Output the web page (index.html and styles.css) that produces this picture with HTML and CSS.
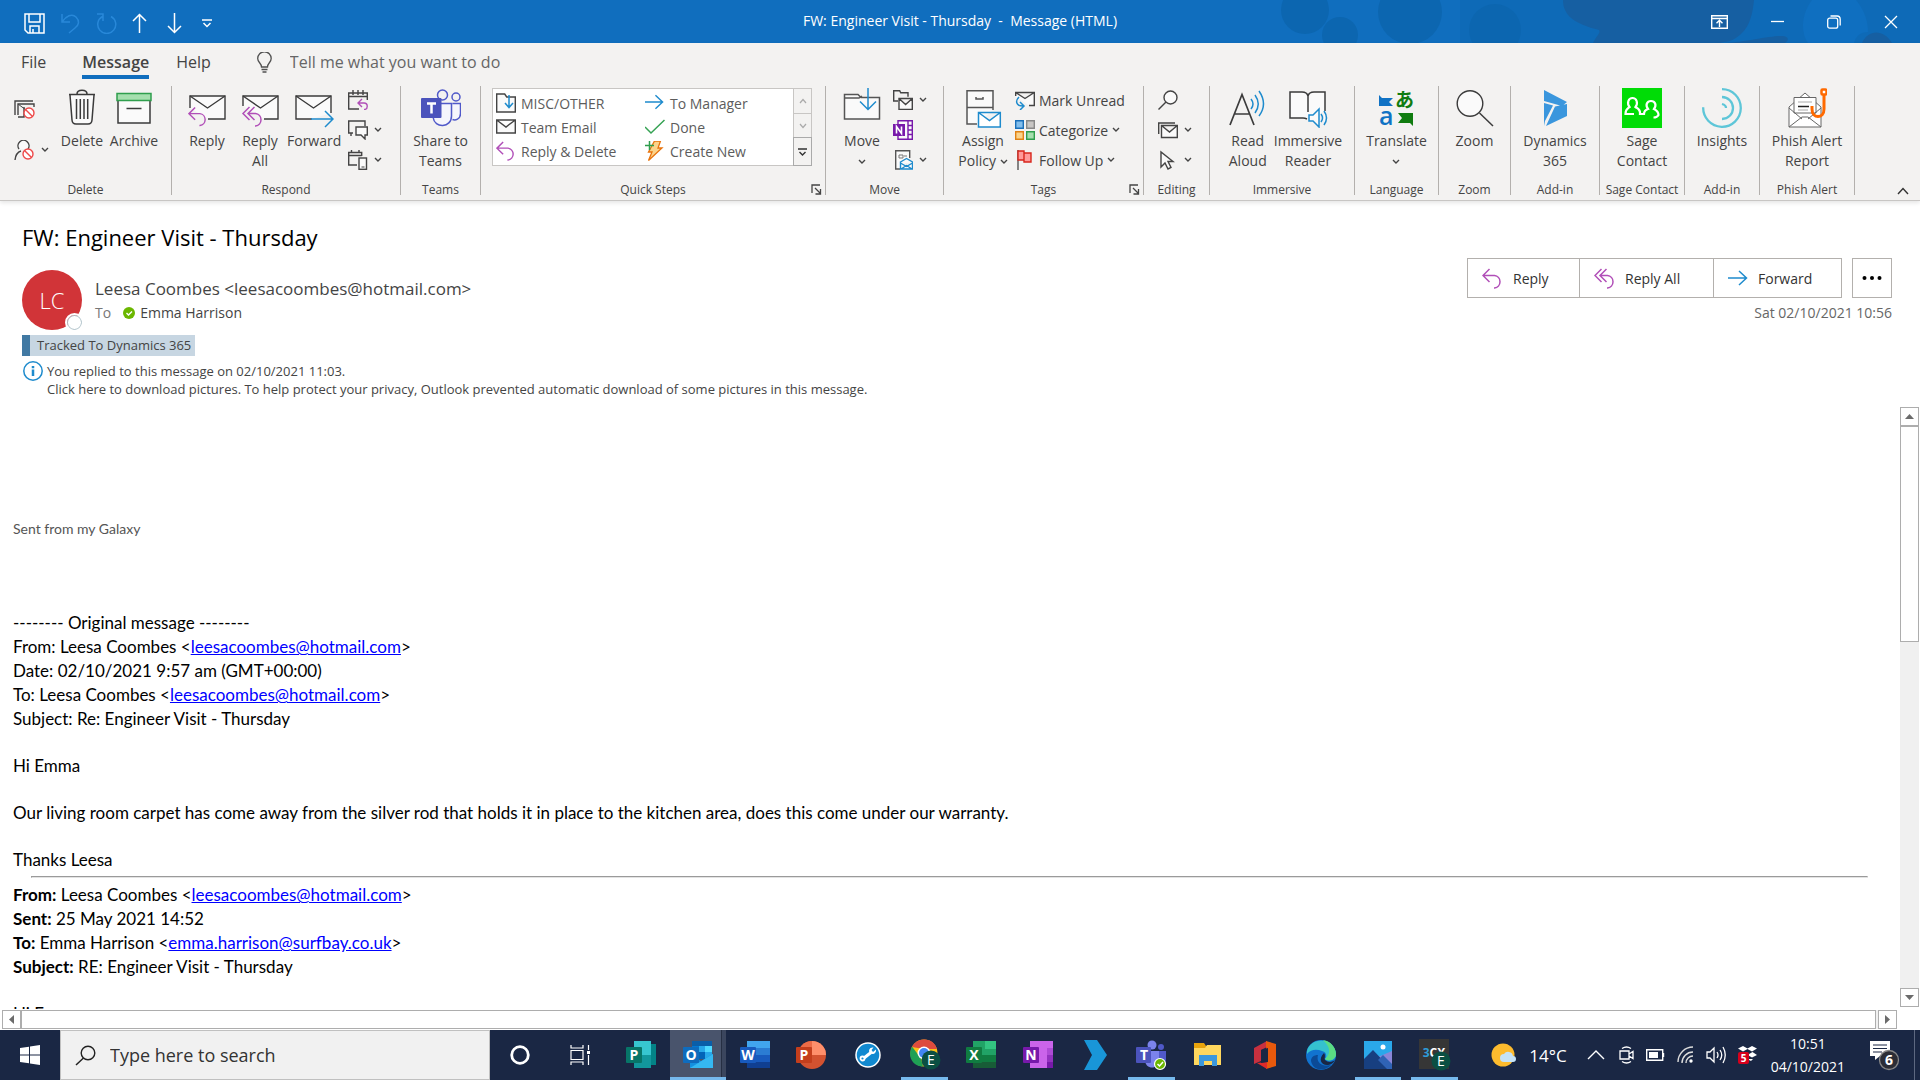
FILE: index.html
```html
<!DOCTYPE html>
<html lang="en">
<head>
    <meta charset="UTF-8">
    <meta name="viewport" content="width=device-width, initial-scale=1.0">
    <title>FW: Engineer Visit - Thursday - Message (HTML)</title>
    <link rel="stylesheet" href="styles.css">
</head>
<body>
    <!-- shared icons -->
    <svg class="sprite" aria-hidden="true">
        <symbol id="chev" viewBox="0 0 8 6"><path d="M1 1l3 3 3-3" fill="none" stroke="currentColor" stroke-width="1.4"/></symbol>
        <symbol id="launch" viewBox="0 0 11 11"><path d="M1 9V1h8M4 4l5 5M9.500 5v5H4.500" fill="none" stroke="#444" stroke-width="1.3"/></symbol>
        <symbol id="reply" viewBox="0 0 21 21"><path d="M7.500 1L1 7.500 7.500 14M1 7.500h11.500a6.300 6.300 0 0 1 0 12.500H12" fill="none" stroke="#b14fb8" stroke-width="1.500"/></symbol>
        <symbol id="replyall" viewBox="0 0 21 21"><path d="M7.500 1L1 7.500 7.500 14M12.500 1L6 7.500l6.500 6.500M6 7.500h7.500a6.300 6.300 0 0 1 0 12.500H13" fill="none" stroke="#b14fb8" stroke-width="1.500"/></symbol>
        <symbol id="forward" viewBox="0 0 20 16"><path d="M0 8h18M11 1l7.500 7L11 15" fill="none" stroke="#1e8bcd" stroke-width="1.500"/></symbol>
        <symbol id="block" viewBox="0 0 12 12"><circle cx="6" cy="6" r="5" fill="#fff" stroke="#ee4a4a" stroke-width="1.400"/><path d="M2.500 2.500l7 7" stroke="#ee4a4a" stroke-width="1.400"/></symbol>
    </svg>

    <header class="titlebar">
        <svg class="titleart" viewBox="0 0 660 43" preserveAspectRatio="xMaxYMin slice" aria-hidden="true">
            <g fill="#0c66b0">
                <circle cx="45" cy="10" r="24"/><circle cx="80" cy="35" r="18"/><circle cx="150" cy="12" r="32"/><circle cx="235" cy="30" r="26"/>
                <path d="M200 0h460v43H200z" opacity=".5"/>
            </g>
            <path fill="#165fa2" d="M303 0h191c-2 22-8 34-24 41l-10 2H333c4-8 8-10 6-13-24-6-36-14-36-30zM465 43c20-1 48-8 58-7 6 1 6 4 2 7zM602 43c6-14 22-14 30 0z"/>
            <path fill="#0f6fc0" d="M552 0h44c10 12 12 24 12 32-8 0-12 4-14 11h-46c-8-12-6-30 4-43z"/>
        </svg>
        <div class="quick">
            <button aria-label="Save"><svg width="21" height="21"><path d="M1 1h19v19H4l-3-3zM5 1v8h11V1M6 20v-7h9v7M9 20v-4" fill="none" stroke="#fff" stroke-width="1.500"/></svg></button>
            <button class="off" aria-label="Undo"><svg width="21" height="21"><path d="M2 1v8h8M2 9C6 3 12 0 16 4s3 8-1 11l-6 5" fill="none" stroke="#2f8fe0" stroke-width="1.500"/></svg></button>
            <button class="off" aria-label="Redo"><svg width="21" height="21"><path d="M1 1h6v7M6.500 3.500A9 9 0 1 0 15 3.500" fill="none" stroke="#2f8fe0" stroke-width="1.500"/></svg></button>
            <button aria-label="Previous item"><svg width="15" height="21"><path d="M7.500 20V1M1 8l6.500-6.500L14 8" fill="none" stroke="#fff" stroke-width="1.500"/></svg></button>
            <button aria-label="Next item"><svg width="15" height="21"><path d="M7.500 0v19M1 13l6.500 6.500L14 13" fill="none" stroke="#fff" stroke-width="1.500"/></svg></button>
            <button aria-label="Customise toolbar"><svg width="10" height="9"><path d="M0 1h10M1.500 4L5 7.500 8.500 4" fill="none" stroke="#fff" stroke-width="1.500"/></svg></button>
        </div>
        <div class="wintitle">FW: Engineer Visit - Thursday &nbsp;-&nbsp; Message (HTML)</div>
        <div class="winbuttons">
            <button aria-label="Ribbon display options"><svg width="17" height="14"><path d="M.7.7h15.600v12.600H.7zM.7 3.500h15.600M8.500 12V5.500M5.500 8.300l3-3 3 3" fill="none" stroke="#fff" stroke-width="1.400"/></svg></button>
            <button aria-label="Minimise"><svg width="13" height="14"><path d="M0 6.500h13" stroke="#fff" stroke-width="1.300"/></svg></button>
            <button aria-label="Restore"><svg width="14" height="14"><rect x=".7" y="3.200" width="10" height="10" rx="2" fill="none" stroke="#fff" stroke-width="1.300"/><path d="M3.500 1h6.500a3.200 3.200 0 0 1 3.200 3.200v6.300" fill="none" stroke="#fff" stroke-width="1.300"/></svg></button>
            <button aria-label="Close"><svg width="14" height="14"><path d="M1 1l12 12M13 1L1 13" stroke="#fff" stroke-width="1.300"/></svg></button>
        </div>
    </header>

    <section class="ribbon">
        <nav class="tabs">
            <a href="#">File</a>
            <a href="#" class="active">Message</a>
            <a href="#">Help</a>
            <label class="tellme">
                <svg width="15" height="21"><path d="M4.500 15c0-4-3.800-4.500-3.800-8.500a6.700 6.700 0 0 1 13.500 0C14.200 10.500 10.500 11 10.500 15zM4.500 17.500h6M5.500 20h4" fill="none" stroke="#505050" stroke-width="1.300"/></svg>
                <input type="text" placeholder="Tell me what you want to do" aria-label="Tell me what you want to do">
            </label>
        </nav>

        <div class="groups">
            <div class="group g-delete">
                <div class="tools">
                    <div class="stack two">
                        <button aria-label="Ignore"><svg width="21" height="20"><path d="M1 15V1h18M4 15V4h16v3M4 17h6V7" fill="none" stroke="#444" stroke-width="1.400"/><path d="M4 4l8 6" stroke="#444"/><use href="#block" x="9" y="7" width="12" height="12"/></svg></button>
                        <button aria-label="Junk"><svg width="21" height="20"><path d="M5 9a5.500 5.500 0 1 1 9 0M1 20c.5-5 3-8 6-9" fill="#fafafa" stroke="#444" stroke-width="1.400"/><use href="#block" x="8" y="8" width="12" height="12"/></svg><svg class="chev"><use href="#chev"/></svg></button>
                    </div>
                    <button class="big"><svg width="40" height="40"><path d="M8 7l2 25q.3 4 4 4h12q3.700 0 4-4l2-25" fill="#fafafa" stroke="#3b3b3b" stroke-width="1.500"/><path d="M7 6.500h26M15 6c0-5 10-5 10 0M14.500 11v20M18.300 11v20M22 11v20M25.700 11v20" fill="none" stroke="#3b3b3b" stroke-width="1.500"/></svg>Delete</button>
                    <button class="big"><svg width="40" height="40"><path d="M4 12h32v23H4z" fill="#fafafa" stroke="#3b3b3b" stroke-width="1.500"/><path d="M3 5.500h34v7H3z" fill="#a5dfae" stroke="#2f9e4d" stroke-width="1.500"/><path d="M12.500 20.500h15" stroke="#3b3b3b" stroke-width="1.500"/></svg>Archive</button>
                </div>
                <h2>Delete</h2>
            </div>

            <div class="group g-respond">
                <div class="tools">
                    <button class="big"><svg width="40" height="40"><path d="M3 20V8h35v23H21" fill="#fafafa" stroke="#3b3b3b" stroke-width="1.400"/><path d="M3 8l17.500 12L38 8" fill="none" stroke="#3b3b3b" stroke-width="1.400"/><use href="#reply" x="1" y="18" width="20" height="21"/></svg>Reply</button>
                    <button class="big"><svg width="40" height="40"><path d="M3 18V8h35v23H24" fill="#fafafa" stroke="#3b3b3b" stroke-width="1.400"/><path d="M3 8l17.500 12L38 8" fill="none" stroke="#3b3b3b" stroke-width="1.400"/><use href="#replyall" x="1" y="18" width="23" height="21"/></svg>Reply<br>All</button>
                    <button class="big"><svg width="40" height="40"><path d="M18 31H2V8h35v17" fill="#fafafa" stroke="#3b3b3b" stroke-width="1.400"/><path d="M2 8l17.500 12L37 8" fill="none" stroke="#3b3b3b" stroke-width="1.400"/><path d="M17 31h21M31 23l8 8-8 8" fill="none" stroke="#1e8bcd" stroke-width="1.500"/></svg>Forward</button>
                    <div class="stack">
                        <button aria-label="Meeting"><svg width="20" height="20"><path d="M11 19H.7V3h18.600v7M.7 6.500h18.600M5 0v5M10 0v5M15 0v5" fill="none" stroke="#444" stroke-width="1.400"/><path d="M14 9l-4 4 4 4M10 13h6a3.200 3.200 0 0 1 0 6.500" fill="none" stroke="#b14fb8" stroke-width="1.400"/></svg></button>
                        <button aria-label="IM"><svg width="20" height="20"><path d="M5 13H3v3M5 13H.7V1H17v5" fill="none" stroke="#444" stroke-width="1.400"/><path d="M8 7h11.300v8H17v4l-4-4H8z" fill="#fafafa" stroke="#444" stroke-width="1.400"/></svg><svg class="chev"><use href="#chev"/></svg></button>
                        <button aria-label="More respond actions"><svg width="20" height="20"><path d="M9 15H.7V2.500h13V6M.7 5.500h13M3.500 0v3M11 0v3" fill="none" stroke="#444" stroke-width="1.400"/><rect x="11" y="8" width="7.500" height="11.300" fill="#fafafa" stroke="#444" stroke-width="1.400"/><path d="M13.500 17h3" stroke="#444"/></svg><svg class="chev"><use href="#chev"/></svg></button>
                    </div>
                </div>
                <h2>Respond</h2>
            </div>

            <div class="group">
                <div class="tools">
                    <button class="big"><svg width="40" height="40"><circle cx="21.500" cy="7" r="5" fill="none" stroke="#5059c9" stroke-width="1.500"/><circle cx="35" cy="9" r="4" fill="none" stroke="#5059c9" stroke-width="1.500"/><path d="M31.500 15.500h8v10c0 6-5.300 7-8 6M12 15.500h18.500V28c0 12-17 13-18.500 1" fill="#f5f5fc" stroke="#5059c9" stroke-width="1.500"/><rect y="10" width="20.500" height="20" rx="1" fill="#4b53bc"/><path d="M6 15.500h9M10.500 15v10.500" stroke="#fff" stroke-width="2.500"/></svg>Share to<br>Teams</button>
                </div>
                <h2>Teams</h2>
            </div>

            <div class="group">
                <div class="tools">
                    <div class="gallery">
                        <div class="steps">
                            <button><svg width="20" height="20"><path d="M.7 1h8l2 3h8.600v15H.7z" fill="#fafafa" stroke="#444" stroke-width="1.400"/><path d="M13 2v12M9 10l4 4.500 4-4.500" fill="none" stroke="#1e8bcd" stroke-width="1.500"/></svg>MISC/OTHER</button>
                            <button><svg width="20" height="20"><use href="#forward" y="1" width="19" height="16"/></svg>To Manager</button>
                            <button><svg width="20" height="20"><path d="M.7 3h18.600v13H.7zM.7 3l9.300 7 9.300-7" fill="#fafafa" stroke="#444" stroke-width="1.400"/></svg>Team Email</button>
                            <button><svg width="20" height="20"><path d="M0 10l6 6L19.500 3" fill="none" stroke="#35a253" stroke-width="1.500"/></svg>Done</button>
                            <button><svg width="20" height="20"><use href="#reply" width="20" height="20"/></svg>Reply &amp; Delete</button>
                            <button><svg width="20" height="20"><path d="M9.500 0h6l-2.500 7h4L3.500 19.500 7 11H3.500z" fill="#fbd38a" stroke="#e8730c" stroke-width="1.300"/><path d="M0 4.500h9M4.500 0v9" stroke="#2f9e4d" stroke-width="1.500"/></svg>Create New</button>
                        </div>
                        <div class="scroller">
                            <button disabled aria-label="Row up"><svg width="8" height="6"><path d="M1 5l3-3.500L7 5" fill="none" stroke="#aaa" stroke-width="1.200"/></svg></button>
                            <button disabled aria-label="Row down"><svg width="8" height="6"><path d="M1 1l3 3.500L7 1" fill="none" stroke="#aaa" stroke-width="1.200"/></svg></button>
                            <button class="more" aria-label="More quick steps"><svg width="9" height="8"><path d="M0 1h9M1.500 4l3 3 3-3" fill="none" stroke="#333" stroke-width="1.400"/></svg></button>
                        </div>
                    </div>
                </div>
                <h2>Quick Steps</h2>
                <button class="launch" aria-label="Quick Steps settings"><svg width="11" height="11"><use href="#launch"/></svg></button>
            </div>

            <div class="group g-move">
                <div class="tools">
                    <button class="big"><svg width="40" height="40"><path d="M2.500 31V6.500H16l3 3h18.500V31z" fill="#fafafa" stroke="#555" stroke-width="1.500"/><path d="M3 10h14l3-2" fill="none" stroke="#555" stroke-width="1.400"/><path d="M26 0v21M18 13.500l8 8 8-8" fill="none" stroke="#1e8bcd" stroke-width="1.500"/></svg>Move<br><svg class="chev"><use href="#chev"/></svg></button>
                    <div class="stack">
                        <button aria-label="Rules"><svg width="20" height="20"><path d="M5 11H.7V.7h6l1 2H15v4" fill="none" stroke="#444" stroke-width="1.400"/><path d="M6 8.500h13.300v11H6zM6 8.500l6.600 6 6.700-6" fill="#fafafa" stroke="#444" stroke-width="1.400"/></svg><svg class="chev"><use href="#chev"/></svg></button>
                        <button aria-label="OneNote"><svg width="20" height="20"><path d="M5 .7h14.300v18.600H5zM15 1v18M15 5.500h4M15 10h4M15 14.500h4" fill="#fafafa" stroke="#7719aa" stroke-width="1.400"/><rect y="4" width="12" height="12" fill="#7719aa"/><path d="M3.500 13.500v-7l5 7v-7" fill="none" stroke="#fff" stroke-width="1.600"/></svg></button>
                        <button aria-label="Actions"><svg width="20" height="20"><path d="M7 19H2.700V.7h14V8" fill="#fafafa" stroke="#555" stroke-width="1.400"/><path d="M6 5h4v3H6zM11 6h3" fill="none" stroke="#777"/><path d="M7.500 12l6-3.500 6 3.500v7h-12zM7.500 13l6 3.500 6-3.500M8 19l5.500-3.500L19 19" fill="#fafafa" stroke="#1e8bcd" stroke-width="1.400"/></svg><svg class="chev"><use href="#chev"/></svg></button>
                    </div>
                </div>
                <h2>Move</h2>
            </div>

            <div class="group g-tags">
                <div class="tools">
                    <button class="big"><svg width="40" height="40"><path d="M14 36H4V2.700h26V22M4 19.500h26M13 9v2h7V9" fill="#fafafa" stroke="#555" stroke-width="1.500"/><path d="M15.500 24.500h21.800V39H15.500zM15.500 24.500l11 8 10.800-8" fill="#fff" stroke="#1e8bcd" stroke-width="1.500"/></svg>Assign<br>Policy <svg class="chev"><use href="#chev"/></svg></button>
                    <div class="stack labelled">
                        <button><svg width="20" height="20"><path d="M.7 6V2.500h18.600v13H14M.7 2.500l9.300 6 9.300-6" fill="#fafafa" stroke="#444" stroke-width="1.400"/><path d="M4 7c-4 4-3 9 4 9M5 12l4 4-4 4" fill="none" stroke="#1e8bcd" stroke-width="1.500"/></svg>Mark Unread</button>
                        <button><svg width="20" height="20"><path d="M.7.7h7.600v7.600H.7z" fill="#83beec" stroke="#1a6fb9" stroke-width="1.400"/><path d="M11.700.7h7.600v7.600h-7.600z" fill="#c8c6c4" stroke="#888" stroke-width="1.400"/><path d="M.7 11.700h7.600v7.600H.7z" fill="#fbd38a" stroke="#e08214" stroke-width="1.400"/><path d="M11.700 11.700h7.600v7.600h-7.600z" fill="#a5dfae" stroke="#2f9e4d" stroke-width="1.400"/></svg>Categorize <svg class="chev"><use href="#chev"/></svg></button>
                        <button><svg width="20" height="20"><path d="M3 0v20" stroke="#555" stroke-width="1.400"/><path d="M3 1h6v2h7v9H9v-2H3zM9 3v7" fill="#ff9a9a" stroke="#d8261c" stroke-width="1.400"/></svg>Follow Up <svg class="chev"><use href="#chev"/></svg></button>
                    </div>
                </div>
                <h2>Tags</h2>
                <button class="launch" aria-label="Tags settings"><svg width="11" height="11"><use href="#launch"/></svg></button>
            </div>

            <div class="group g-edit">
                <div class="tools">
                    <div class="stack">
                        <button aria-label="Find"><svg width="20" height="20"><circle cx="12.500" cy="7.500" r="6.500" fill="#fafafa" stroke="#444" stroke-width="1.400"/><path d="M8 12l-7.500 7.500" stroke="#444" stroke-width="1.400"/></svg></button>
                        <button aria-label="Related"><svg width="20" height="20"><path d="M.7 14V3H17" fill="none" stroke="#444" stroke-width="1.400"/><path d="M3.500 5.500h15.800v12H3.500zM3.500 5.500l8 6.500 7.800-6.500" fill="#fafafa" stroke="#444" stroke-width="1.400"/></svg><svg class="chev"><use href="#chev"/></svg></button>
                        <button aria-label="Select"><svg width="20" height="20"><path d="M3 2v15l4-4 3 6 3-1.500-3-6h5z" fill="#fafafa" stroke="#444" stroke-width="1.400"/></svg><svg class="chev"><use href="#chev"/></svg></button>
                    </div>
                </div>
                <h2>Editing</h2>
            </div>

            <div class="group">
                <div class="tools">
                    <button class="big"><svg width="40" height="40"><path d="M2 37L14 6.500 26 37M6 26h16" fill="none" stroke="#3b3b3b" stroke-width="1.700"/><path d="M23 11q4 5 0 10M27 7q6.500 9 0 18M31 3q9 13 0 25" fill="none" stroke="#1e8bcd" stroke-width="1.500"/></svg>Read<br>Aloud</button>
                    <button class="big"><svg width="40" height="40"><path d="M19 31q-2-1-4-1H2V4h12q5 0 6 4 1-4 6-4h11v19M20 7v17" fill="#fafafa" stroke="#3b3b3b" stroke-width="1.500"/><path d="M21 27h4l6-6v18l-6-6h-4zM33 26q3 4 0 8M36 23q5 7 0 14" fill="#fafafa" stroke="#1e8bcd" stroke-width="1.500"/></svg>Immersive<br>Reader</button>
                </div>
                <h2>Immersive</h2>
            </div>

            <div class="group">
                <div class="tools">
                    <button class="big"><svg width="40" height="40"><path d="M3 7l3 3h11l-4 4 4 4H3z" fill="#1072c4"/><path d="M22 25h15v13l-3-3H22l4-5z" fill="#107c10"/><text x="3" y="37" font-size="25" font-weight="600" fill="#1072c4">a</text><text class="cjk" x="19" y="19" font-size="19" font-weight="700" fill="#107c10">あ</text></svg>Translate<br><svg class="chev"><use href="#chev"/></svg></button>
                </div>
                <h2>Language</h2>
            </div>

            <div class="group">
                <div class="tools">
                    <button class="big"><svg width="40" height="40"><circle cx="15" cy="15.500" r="12.800" fill="#fafafa" stroke="#3b3b3b" stroke-width="1.400"/><path d="M24.500 25L38 38" stroke="#3b3b3b" stroke-width="1.500"/></svg>Zoom</button>
                </div>
                <h2>Zoom</h2>
            </div>

            <div class="group">
                <div class="tools">
                    <button class="big"><svg width="40" height="40"><path d="M9 2l23 12-5 4L9 13zM9 15l9 2.500L10 33 9 38zM32 16v12L11 38 20 18.500z" fill="#3a96dd"/></svg>Dynamics<br>365</button>
                </div>
                <h2>Add-in</h2>
            </div>

            <div class="group">
                <div class="tools">
                    <button class="big"><svg width="40" height="40"><path d="M0 0h40v40H0z" fill="#00dc06"/><path d="M12 26H3.500c0-5 2-5.500 4-7-3-4-1-9 3-9s6 5 3 9c2 1.500 5 2 4.500 7h4c0-3 1-4 4-5-3-4-1-8 3-8s6 4 3 8c3 1.500 4.500 3 4.500 6-1 2-3 2.500-5 2.500" fill="none" stroke="#fff" stroke-width="2.200"/></svg>Sage<br>Contact</button>
                </div>
                <h2>Sage Contact</h2>
            </div>

            <div class="group">
                <div class="tools">
                    <button class="big"><svg width="40" height="40"><path d="M20 1.200a18.800 18.800 0 1 1-18.800 18M20 9a11 11 0 0 1 0 22M20 16q4 1 4 4" fill="none" stroke="#5ec6d8" stroke-width="2.300"/></svg>Insights</button>
                </div>
                <h2>Add-in</h2>
            </div>

            <div class="group">
                <div class="tools">
                    <button class="big"><svg width="40" height="40"><path d="M2 19l16-14 16 14v20H2z" fill="#fff" stroke="#666"/><path d="M7 9.500h22V25H7z" fill="#fff" stroke="#666"/><path d="M2 20l13 11M34 20L21 31M2 39l13-10h6l13 10" fill="none" stroke="#666"/><path d="M11 14h14M11 22h10" stroke="#aaa"/><path d="M11 18.500h11" stroke="#222" stroke-width="1.500"/><path d="M37 7v14c0 10-12 10-12 0v-3" fill="none" stroke="#ff6a00" stroke-width="3"/><rect x="34.500" y="1.500" width="5" height="5" rx="1" fill="#fff" stroke="#ff6a00" stroke-width="2.500"/></svg>Phish Alert<br>Report</button>
                </div>
                <h2>Phish Alert</h2>
            </div>

            <button class="collapse" aria-label="Collapse the ribbon"><svg width="12" height="8"><path d="M1 7l5-5.500L11 7" fill="none" stroke="#333" stroke-width="1.400"/></svg></button>
        </div>
    </section>

    <main class="message">
        <h1>FW: Engineer Visit - Thursday</h1>
        <div class="meta">
            <div class="avatar">LC<span class="presence"></span></div>
            <div class="people">
                <div class="sender">Leesa Coombes &lt;leesacoombes@hotmail.com&gt;</div>
                <div class="to"><span>To</span><svg width="12" height="12"><circle cx="6" cy="6" r="6" fill="#6bb700"/><path d="M3.500 6l2 2 3.500-3.500" fill="none" stroke="#fff" stroke-width="1.400"/></svg>Emma Harrison</div>
            </div>
            <div class="respond">
                <div class="actions">
                    <button><svg width="21" height="21"><use href="#reply"/></svg>Reply</button>
                    <button><svg width="21" height="21"><use href="#replyall"/></svg>Reply All</button>
                    <button><svg width="20" height="16"><use href="#forward"/></svg>Forward</button>
                    <button class="dots" aria-label="More actions"><svg width="20" height="4"><circle cx="2.500" cy="2" r="2"/><circle cx="10" cy="2" r="2"/><circle cx="17.500" cy="2" r="2"/></svg></button>
                </div>
                <time>Sat 02/10/2021 10:56</time>
            </div>
        </div>
        <div class="tracked">Tracked To Dynamics 365</div>
        <div class="info">
            <svg width="20" height="20"><circle cx="10" cy="10" r="9.200" fill="#fff" stroke="#1e8bcd" stroke-width="1.500"/><path d="M10 8.500V15M10 5v2.200" stroke="#1e8bcd" stroke-width="2.500"/></svg>
            <div>You replied to this message on 02/10/2021 11:03.<br>Click here to download pictures. To help protect your privacy, Outlook prevented automatic download of some pictures in this message.</div>
        </div>

        <div class="reader">
            <article class="mail">
                <p class="signature">Sent from my Galaxy</p>
                <p>-------- Original message --------<br>
                From: Leesa Coombes &lt;<a href="mailto:leesacoombes@hotmail.com">leesacoombes@hotmail.com</a>&gt;<br>
                Date: 02/10/2021 9:57 am (GMT+00:00)<br>
                To: Leesa Coombes &lt;<a href="mailto:leesacoombes@hotmail.com">leesacoombes@hotmail.com</a>&gt;<br>
                Subject: Re: Engineer Visit - Thursday</p>
                <p>Hi Emma</p>
                <p>Our living room carpet has come away from the silver rod that holds it in place to the kitchen area, does this come under our warranty.</p>
                <p class="last">Thanks Leesa</p>
                <hr>
                <p><b>From:</b> Leesa Coombes &lt;<a href="mailto:leesacoombes@hotmail.com">leesacoombes@hotmail.com</a>&gt;<br>
                <b>Sent:</b> 25 May 2021 14:52<br>
                <b>To:</b> Emma Harrison &lt;<a href="mailto:emma.harrison@surfbay.co.uk">emma.harrison@surfbay.co.uk</a>&gt;<br>
                <b>Subject:</b> RE: Engineer Visit - Thursday</p>
                <p>Hi Emma</p>
            </article>
            <div class="vscroll">
                <button aria-label="Scroll up"><svg width="9" height="5"><path d="M0 5l4.500-5L9 5z"/></svg></button>
                <div class="thumb"></div>
                <button aria-label="Scroll down"><svg width="9" height="5"><path d="M0 0l4.500 5L9 0z"/></svg></button>
            </div>
        </div>
        <div class="hscroll">
            <button aria-label="Scroll left"><svg width="5" height="9"><path d="M5 0L0 4.500 5 9z"/></svg></button>
            <div class="thumb"></div>
            <button aria-label="Scroll right"><svg width="5" height="9"><path d="M0 0l5 4.500L0 9z"/></svg></button>
        </div>
    </main>

    <footer class="taskbar">
        <button class="start" aria-label="Start"><svg width="20" height="20"><path d="M0 3l9-1.300V9.500H0zM10 1.500L20 0v9.500H10zM0 10.500h9v7.800L0 17zM10 10.500h10V20l-10-1.500z" fill="#fff"/></svg></button>
        <label class="search">
            <svg width="21" height="21"><circle cx="13" cy="8" r="6.800" fill="none" stroke="#222" stroke-width="1.400"/><path d="M8.500 13L1 20" stroke="#222" stroke-width="1.500"/></svg>
            <input type="text" placeholder="Type here to search" aria-label="Type here to search">
        </label>
        <button class="sys" aria-label="Cortana"><svg width="20" height="20"><circle cx="10" cy="10" r="8.300" fill="none" stroke="#fff" stroke-width="2.800"/></svg></button>
        <button class="sys" aria-label="Task view"><svg width="21" height="20"><path d="M1 0v3h12V0M1 20v-3h12v3M1 5.500h12v9H1zM18.500 0v5M18.500 10v10" fill="none" stroke="#fff" stroke-width="1.200"/><path d="M17 6h3v3h-3z" fill="#fff"/></svg></button>

        <div class="apps">
            <button aria-label="Publisher"><svg width="30" height="30"><path d="M12 4h18v21H12z" fill="#038387"/><path d="M8 1h17v14H8z" fill="#37c6d0"/><path d="M8 15h17v13H8z" fill="#12979c"/><rect y="7" width="16" height="16" rx="1" fill="#077568"/><text x="8" y="20" class="letter">P</text></svg></button>
            <button class="current" aria-label="Outlook"><svg width="30" height="30"><path d="M9 1h20v18H9z" fill="#28a8ea"/><path d="M9 1h20v5H9z" fill="#0a5ea8"/><path d="M9 6h7v6H9z" fill="#0078d4"/><path d="M16 12h6v7h-6z" fill="#0364b8"/><path d="M22 6h7v6h-7z" fill="#50d9ff"/><path d="M7 14l11 7 12-7v14H7z" fill="#1490df"/><path d="M7 28l23-14v14z" fill="#35b8f1"/><rect y="7" width="16" height="16" rx="1" fill="#0f6cbd"/><text x="8" y="20" class="letter">O</text></svg></button>
            <button aria-label="Word"><svg width="30" height="30"><path d="M7 1h23v7H7z" fill="#41a5ee"/><path d="M7 8h23v7H7z" fill="#2b7cd3"/><path d="M7 15h23v7H7z" fill="#185abd"/><path d="M7 22h23v6H7z" fill="#103f91"/><rect y="7" width="16" height="16" rx="1" fill="#185abd"/><text x="8" y="20" class="letter">W</text></svg></button>
            <button aria-label="PowerPoint"><svg width="30" height="30"><circle cx="16" cy="15" r="14" fill="#d35230"/><path d="M16 1a14 14 0 0 1 14 14H16z" fill="#ff8f6b"/><path d="M2 15A14 14 0 0 1 16 1v14z" fill="#ed6c47"/><rect y="7" width="16" height="16" rx="1" fill="#c43e1c"/><text x="8" y="20" class="letter">P</text></svg></button>
            <button aria-label="Support tool"><svg width="30" height="30"><circle cx="15" cy="15" r="12" fill="#1189d0" stroke="#fff" stroke-width="1.500"/><path d="M11 18l7-5.500" stroke="#fff" stroke-width="3"/><circle cx="9.500" cy="18.500" r="2" fill="none" stroke="#fff" stroke-width="1.800"/><path d="M23 9.500l-3 2.500-1.500-2 2-2.500c-4-.5-5.500 3-3.500 5.500 2.500 2.500 6.500.500 6-3.500z" fill="#fff"/></svg></button>
            <button class="open" aria-label="Chrome"><svg width="32" height="32"><circle cx="15" cy="14" r="13.500" fill="#fbc116"/><path d="M3 8a13.500 13.500 0 0 1 25 2H15z" fill="#dd4b3e"/><path d="M3 7.500l9 12 2 8C3 27-2 17 3 7.500z" fill="#1fa055"/><circle cx="15" cy="14" r="6.500" fill="#fff"/><circle cx="15" cy="14" r="5" fill="#4285f4"/><circle cx="22" cy="21" r="9.500" fill="#0b4f43"/><text x="22" y="26" class="letter thin">E</text></svg></button>
            <button aria-label="Excel"><svg width="30" height="30"><path d="M7 1h12v27H7z" fill="#21a366"/><path d="M19 1h11v8H19z" fill="#33c481"/><path d="M19 9h11v6H19z" fill="#21a366"/><path d="M7 15h23v13H7z" fill="#107c41"/><path d="M7 22h23v6H7z" fill="#185c37"/><rect y="7" width="16" height="16" rx="1" fill="#107c41"/><text x="8" y="20" class="letter">X</text></svg></button>
            <button aria-label="OneNote"><svg width="30" height="30"><path d="M7 1h23v27H7z" fill="#ca64ea"/><path d="M24 8h6v7h-6z" fill="#ae4bd5"/><path d="M24 15h6v7h-6z" fill="#9332bf"/><path d="M24 22h6v6h-6z" fill="#7719aa"/><rect y="7" width="16" height="16" rx="1" fill="#7719aa"/><text x="8" y="20" class="letter">N</text></svg></button>
            <button aria-label="Remote help"><svg width="30" height="30"><path d="M4 0h13l10 15-10 15H4l8-15z" fill="#1996d8"/></svg></button>
            <button class="open" aria-label="Teams"><svg width="31" height="31"><circle cx="16" cy="5" r="4.500" fill="#7b83eb"/><circle cx="25" cy="7" r="3" fill="#5059c9"/><path d="M20 11h10v9c0 4-10 4-10 0z" fill="#5059c9"/><path d="M9 11h14v9c0 10-14 10-14 0z" fill="#7b83eb"/><rect y="7" width="15" height="16" rx="1" fill="#4b53bc"/><text x="8" y="20" class="letter">T</text><circle cx="24" cy="24" r="5.500" fill="#6bb700" stroke="#fff" stroke-width="1.200"/><path d="M21.500 24l2 2 3.500-4" fill="none" stroke="#fff" stroke-width="1.500"/></svg></button>
            <button aria-label="File Explorer"><svg width="30" height="30"><path d="M1 3h10l2 3h15v18H1z" fill="#e8a30c"/><path d="M1 8h11l2-3h14v20H1z" fill="#ffd75e"/><path d="M6 26V15h18v11h-5v-5h-8v5z" fill="#3b97dd"/></svg></button>
            <button aria-label="Office"><svg width="30" height="30"><path d="M4 8L17 1v6l-6 3v11l-7 3z" fill="#c8303f"/><path d="M16 1l10 3v22l-10 3z" fill="#e8590c"/><path d="M16 8v14l-9 1 10 6V7z" fill="#e02a2a"/><path d="M11 10l7-2v14l-7 1z" fill="#1a2744"/></svg></button>
            <button aria-label="Edge"><svg width="30" height="30"><circle cx="15" cy="15" r="15" fill="#1173cf"/><path d="M1 11C4-3 28-4 30 14c0 7-8 8-11 5 2-2 2-7-3-8-5-2-11-2-15 3z" fill="#35c1cf"/><path d="M17 0c8 1 13 8 13 14 0 6-8 8-11 5 8-7 3-14-2-19z" fill="#5bdc83"/><path d="M12 15c-2 7 3 12 13 10-6 7-18 6-20-4 0-4 3-6 7-6z" fill="#0b4a96"/><path d="M18 13c2 3 0 5 1 7 3 3 8 2 10 0-2 4-5 5-8 5-6 0-9-6-3-12z" fill="#1a2744"/></svg></button>
            <button class="open" aria-label="Photos"><svg width="28" height="28"><path d="M0 0h28v28H0z" fill="#2aa8ea"/><path d="M28 10v18L14 16z" fill="#8a86d8"/><path d="M0 18l9-9 18 19H0z" fill="#173f80"/><path d="M14 19l5-5 9 9v5h-5z" fill="#2f63b5"/><circle cx="19" cy="6" r="2.500" fill="#fff"/></svg></button>
            <button class="open" aria-label="3CX"><svg width="32" height="32"><path d="M0 0h30v30H0z" fill="#363636"/><text x="15" y="18" class="letter small"><tspan fill="#2d9bd8">3</tspan>CX</text><circle cx="22" cy="22" r="9.500" fill="#0b4f43"/><text x="22" y="27" class="letter thin">E</text></svg></button>
        </div>

        <div class="tray">
            <svg width="26" height="25"><circle cx="12" cy="12" r="11.500" fill="#fdbb2e"/><path d="M13 19a4 4 0 0 1 0-8 5 5 0 0 1 9 2 3 3 0 0 1 0 6z" fill="#c5e3f8"/></svg>
            <span class="temp">14°C</span>
            <svg class="expand" width="18" height="10"><path d="M1 9L9 1l8 8" fill="none" stroke="#fff" stroke-width="1.400"/></svg>
            <svg width="15" height="18"><path d="M1 5h9v8H1zM10 8l4-2.500v7L10 10M3 2.500q4.500-3 9 0M3 15.500q4.500 3 9 0" fill="none" stroke="#fff" stroke-width="1.300"/></svg>
            <svg width="19" height="12"><path d="M.7.7h16v10.600h-16zM17.500 4v4" fill="none" stroke="#fff" stroke-width="1.400"/><path d="M3 3h9v6H3z" fill="#fff"/></svg>
            <svg width="17" height="18"><path d="M1 16A15 15 0 0 1 16 1M5 17A11 11 0 0 1 16 6M9 17a7 7 0 0 1 7-7" fill="none" stroke="#ddd" stroke-width="1.400"/><circle cx="14" cy="15" r="1.700" fill="#fff"/></svg>
            <svg width="20" height="18"><path d="M1 6h3l4-4v14l-4-4H1zM11 6q2 3 0 6M14 4q3.500 5 0 10M17 1q4.500 8 0 16" fill="none" stroke="#fff" stroke-width="1.300"/></svg>
            <svg width="19" height="20"><path d="M0 3.500L5 1l4.500 2.500L14 1l5 2.500L14 6.500 9.500 4 5 6.500zM9.500 10l5-3 4.500 3-5 2.500zM9 14l4 2 2-2z" fill="#fff"/><rect y="7" width="11" height="12" rx="2" fill="#d6001c"/><text x="5.500" y="17" class="count">5</text></svg>
            <time class="clock">10:51<br>04/10/2021</time>
            <button class="notes" aria-label="6 notifications"><svg width="31" height="32"><path d="M1 2h20v15H11l-5 4v-4H1z" fill="#fff"/><path d="M4 6h14M4 9.500h14M4 13h9" stroke="#1a2744" stroke-width="1.200"/><circle cx="20" cy="21" r="9.500" fill="#2b2d36" stroke="#888" stroke-width="1.300"/><text x="20" y="26" class="letter">6</text></svg></button>
        </div>
    </footer>
</body>
</html>
```
FILE: styles.css
```css
* {
    box-sizing: border-box;
}
body {
    margin: 0;
    height: 100vh;
    display: flex;
    flex-direction: column;
    font-family: "Segoe UI", "Open Sans", sans-serif;
    font-size: 14px;
    color: #444;
    background: #fff;
    overflow: hidden;
}
button {
    font: inherit;
    color: inherit;
    background: none;
    border: none;
    padding: 0;
}
input {
    font: inherit;
    border: none;
    background: none;
    outline: none;
    padding: 0;
    flex: 1;
    min-width: 0;
}
svg {
    display: block;
    flex: none;
}
.sprite {
    position: absolute;
    width: 0;
    height: 0;
}

/* title bar */
.titlebar {
    position: relative;
    flex: none;
    height: 43px;
    display: grid;
    grid-template-columns: 1fr auto 1fr;
    align-items: center;
    background: #106ebe;
    color: #fff;
}
.titleart {
    position: absolute;
    right: 0;
    top: 0;
    width: 660px;
    height: 43px;
}
.quick {
    display: flex;
    align-items: center;
    gap: 15px;
    padding: 3px 0 0 24px;
}
.quick button:nth-child(n+5) {
    margin-left: 5px;
}
.off {
    opacity: 0.8;
}
.wintitle {
    position: relative;
    white-space: pre;
    line-height: 20px;
    padding-bottom: 2px;
}
.winbuttons {
    position: relative;
    display: flex;
    justify-content: flex-end;
    gap: 43px;
    padding-right: 22px;
}

/* ribbon */
.ribbon {
    position: relative;
    flex: none;
    background: #f3f2f1;
    border-bottom: 1px solid #c8c6c4;
    box-shadow: 0 2px 4px rgba(0, 0, 0, 0.1);
}
.tabs {
    display: flex;
    height: 36px;
    padding-left: 21px;
    font-size: 16px;
    line-height: 38px;
}
.tabs a {
    color: #444;
    text-decoration: none;
    margin-right: 36px;
}
.tabs .active {
    font-weight: 600;
    border-bottom: 4px solid #106ebe;
    margin-right: 27px;
}
.tellme {
    display: flex;
    align-items: center;
    gap: 18px;
    margin-left: 10px;
    padding-top: 2px;
    flex: 1;
}
.tellme input::placeholder {
    color: #666;
    opacity: 1;
}
.groups {
    display: grid;
    grid-template-columns: 172px 229px 80px 345px 118px 200px 66px 145px 84px 72px 89px 85px 75px 95px 1fr;
    padding: 7px 0 5px;
}
.group {
    position: relative;
    height: 109px;
    display: flex;
    flex-direction: column;
    border-right: 1px solid #b3b0ad;
}
.group h2 {
    margin: 0;
    font-size: 12px;
    font-weight: 400;
    line-height: 10px;
    text-align: center;
    white-space: nowrap;
}
.tools {
    flex: 1;
    display: flex;
    justify-content: center;
    padding-top: 2px;
}
.big {
    min-width: 52px;
    line-height: 20px;
    text-align: center;
    align-self: flex-start;
    white-space: nowrap;
}
.big > svg:first-child {
    margin: 0 auto 3px;
}
.chev {
    display: inline-block;
    width: 8px;
    height: 6px;
    vertical-align: middle;
}
.stack {
    display: flex;
    flex-direction: column;
    gap: 10px;
    padding-top: 2px;
}
.stack button {
    display: flex;
    align-items: center;
    gap: 6px;
    height: 20px;
    white-space: nowrap;
}
.stack.two {
    gap: 20px;
    padding: 12px 7px 0 0;
}
.g-delete .tools,
.g-respond .tools,
.g-move .tools,
.g-tags .tools,
.g-edit .tools {
    justify-content: flex-start;
}
.g-delete .tools {
    padding-left: 14px;
}
.g-respond .tools {
    gap: 1px;
    padding-left: 9px;
}
.g-respond .stack {
    padding-left: 6px;
}
.g-move .tools {
    padding-left: 10px;
}
.g-move .stack {
    padding-left: 5px;
}
.g-tags .tools {
    padding-left: 13px;
}
.g-tags .stack {
    padding-left: 6px;
}
.g-edit .tools {
    padding-left: 14px;
}
.labelled button {
    gap: 4px;
}
.launch {
    position: absolute;
    right: 3px;
    bottom: 0;
}
.collapse {
    align-self: end;
    justify-self: end;
    margin-right: 11px;
}
.gallery {
    display: flex;
    width: 320px;
    height: 78px;
    margin-right: 2px;
    background: #fff;
    border: 1px solid #c8c6c4;
}
.steps {
    flex: 1;
    display: grid;
    grid-template-columns: 149px 1fr;
    grid-auto-rows: 24px;
    padding: 2px 0 0 3px;
    color: #5c5c5c;
}
.steps button {
    display: flex;
    align-items: center;
    gap: 5px;
    white-space: nowrap;
}
.scroller {
    width: 18px;
    display: grid;
    grid-template-rows: 25px 24px 27px;
    border-left: 1px solid #c8c6c4;
}
.scroller button {
    display: grid;
    place-items: center;
    background: #f3f2f1;
    border-bottom: 1px solid #c8c6c4;
}
.scroller .more {
    outline: 1px solid #aaa;
    border: none;
}

/* message header */
.message {
    flex: 1;
    min-height: 0;
    display: flex;
    flex-direction: column;
}
.message h1 {
    margin: 20px 22px 0;
    font-size: 22px;
    line-height: 32px;
    font-weight: 400;
    color: #000;
}
.meta {
    display: flex;
    padding: 5px 28px 0 22px;
}
.avatar {
    position: relative;
    width: 60px;
    height: 60px;
    margin-top: 12px;
    border-radius: 50%;
    background: #d13438;
    color: #fff;
    font-size: 22px;
    font-weight: 300;
    line-height: 60px;
    text-align: center;
}
.presence {
    position: absolute;
    right: 0;
    bottom: 0;
    width: 15px;
    height: 15px;
    border-radius: 50%;
    background: #fff;
    border: 1px solid #a3b9c2;
    outline: 2px solid #fff;
}
.people {
    flex: 1;
    padding: 17px 0 0 13px;
}
.sender {
    font-size: 17px;
    line-height: 27px;
}
.to {
    display: flex;
    align-items: center;
    gap: 5px;
    line-height: 22px;
}
.to span {
    color: #777;
    margin-right: 7px;
}
.respond {
    text-align: right;
    color: #666;
}
.actions {
    display: flex;
    height: 40px;
    color: #333;
}
.actions button {
    display: flex;
    align-items: center;
    gap: 10px;
    width: 113px;
    padding-left: 14px;
    border: 1px solid #b3b0ad;
    margin-right: -1px;
}
.actions button:nth-child(2) {
    width: 135px;
}
.actions button:nth-child(3) {
    width: 129px;
}
.actions .dots {
    width: 40px;
    margin: 0 0 0 11px;
    padding: 0;
    justify-content: center;
}
.respond time {
    display: block;
    line-height: 30px;
}
.tracked {
    align-self: flex-start;
    margin: 5px 0 5px 22px;
    padding: 0 4px 0 7px;
    border-left: 8px solid #4179a3;
    background: #c7d6e2;
    font-size: 13px;
    line-height: 21px;
}
.info {
    display: flex;
    gap: 4px;
    padding-left: 23px;
    font-size: 13px;
    line-height: 18px;
}
.info div {
    padding-top: 1px;
}

/* message body */
.reader {
    flex: 1;
    min-height: 0;
    display: flex;
    margin-top: 9px;
}
.mail {
    flex: 1;
    overflow: hidden;
    padding: 110px 13px 0;
    font-family: Lato, sans-serif;
    font-size: 17px;
    line-height: 24px;
    color: #000;
}
.mail p {
    margin: 0 0 23px;
}
.mail .signature {
    font-size: 14px;
    color: #555;
    margin-bottom: 70px;
}
.mail .last {
    margin: 0;
}
.mail hr {
    margin: 4px 19px 5px 18px;
    border: 1px solid #9a9a9a;
    border-bottom-color: #e3e3e3;
    border-right-color: #e3e3e3;
}
.mail a {
    color: #0000ff;
}
.vscroll {
    width: 19px;
    margin: 0 1px 2px 0;
    display: flex;
    flex-direction: column;
    background: #f0f0f0;
}
.vscroll button,
.hscroll button {
    flex: none;
    display: grid;
    place-items: center;
    width: 19px;
    height: 19px;
    background: #fff;
    border: 1px solid #adadad;
    fill: #6b6b6b;
}
.thumb {
    background: #fff;
    border: 1px solid #adadad;
}
.vscroll .thumb {
    height: 36%;
    margin-bottom: auto;
}
.hscroll {
    display: flex;
    flex: none;
    margin: 1px 23px 1px 2px;
    background: #f0f0f0;
}
.hscroll .thumb {
    flex: 1;
    margin-right: 2px;
}

/* taskbar */
.taskbar {
    flex: none;
    height: 50px;
    display: flex;
    align-items: center;
    background: #1a2744;
    color: #fff;
}
.start {
    width: 60px;
    display: grid;
    place-items: center;
}
.search {
    width: 430px;
    height: 50px;
    display: flex;
    align-items: center;
    gap: 14px;
    padding-left: 14px;
    background: #f1f1f1;
    border: 1px solid #c0c0c0;
    font-size: 18px;
}
.search input::placeholder {
    color: #333;
    opacity: 1;
}
.sys {
    width: 60px;
    display: grid;
    place-items: center;
}
.apps {
    display: grid;
    grid-template-columns: repeat(15, 1fr);
    align-self: stretch;
    width: 850px;
    margin-left: 3px;
}
.apps button {
    display: grid;
    place-items: center;
    border-bottom: 3px solid transparent;
    padding-top: 3px;
}
.apps .open {
    margin: 0 5px;
    border-color: #76b9ed;
}
.apps .current {
    background: linear-gradient(90deg, #49546c 91%, #262f43 91%, #262f43 92%, #3b465e 92%);
    border-color: #76b9ed;
}
.letter {
    font-size: 14px;
    font-weight: 700;
    fill: #fff;
    text-anchor: middle;
}
.small {
    font-size: 12px;
}
.thin {
    font-weight: 400;
}
.count {
    font-size: 10px;
    font-weight: 700;
    fill: #fff;
    text-anchor: middle;
}
.cjk {
    font-family: "Noto Sans CJK JP", sans-serif;
}
.tray {
    flex: 1;
    display: flex;
    align-items: center;
    align-self: stretch;
    justify-content: flex-end;
    gap: 12px;
    border-right: 1px solid #5d6880;
    margin-right: 5px;
    padding-right: 14px;
}
.temp {
    font-size: 17px;
    margin-right: 8px;
}
.expand {
    margin-right: 2px;
}
.clock {
    text-align: center;
    line-height: 23px;
    margin: 0 12px 0 2px;
}
```
